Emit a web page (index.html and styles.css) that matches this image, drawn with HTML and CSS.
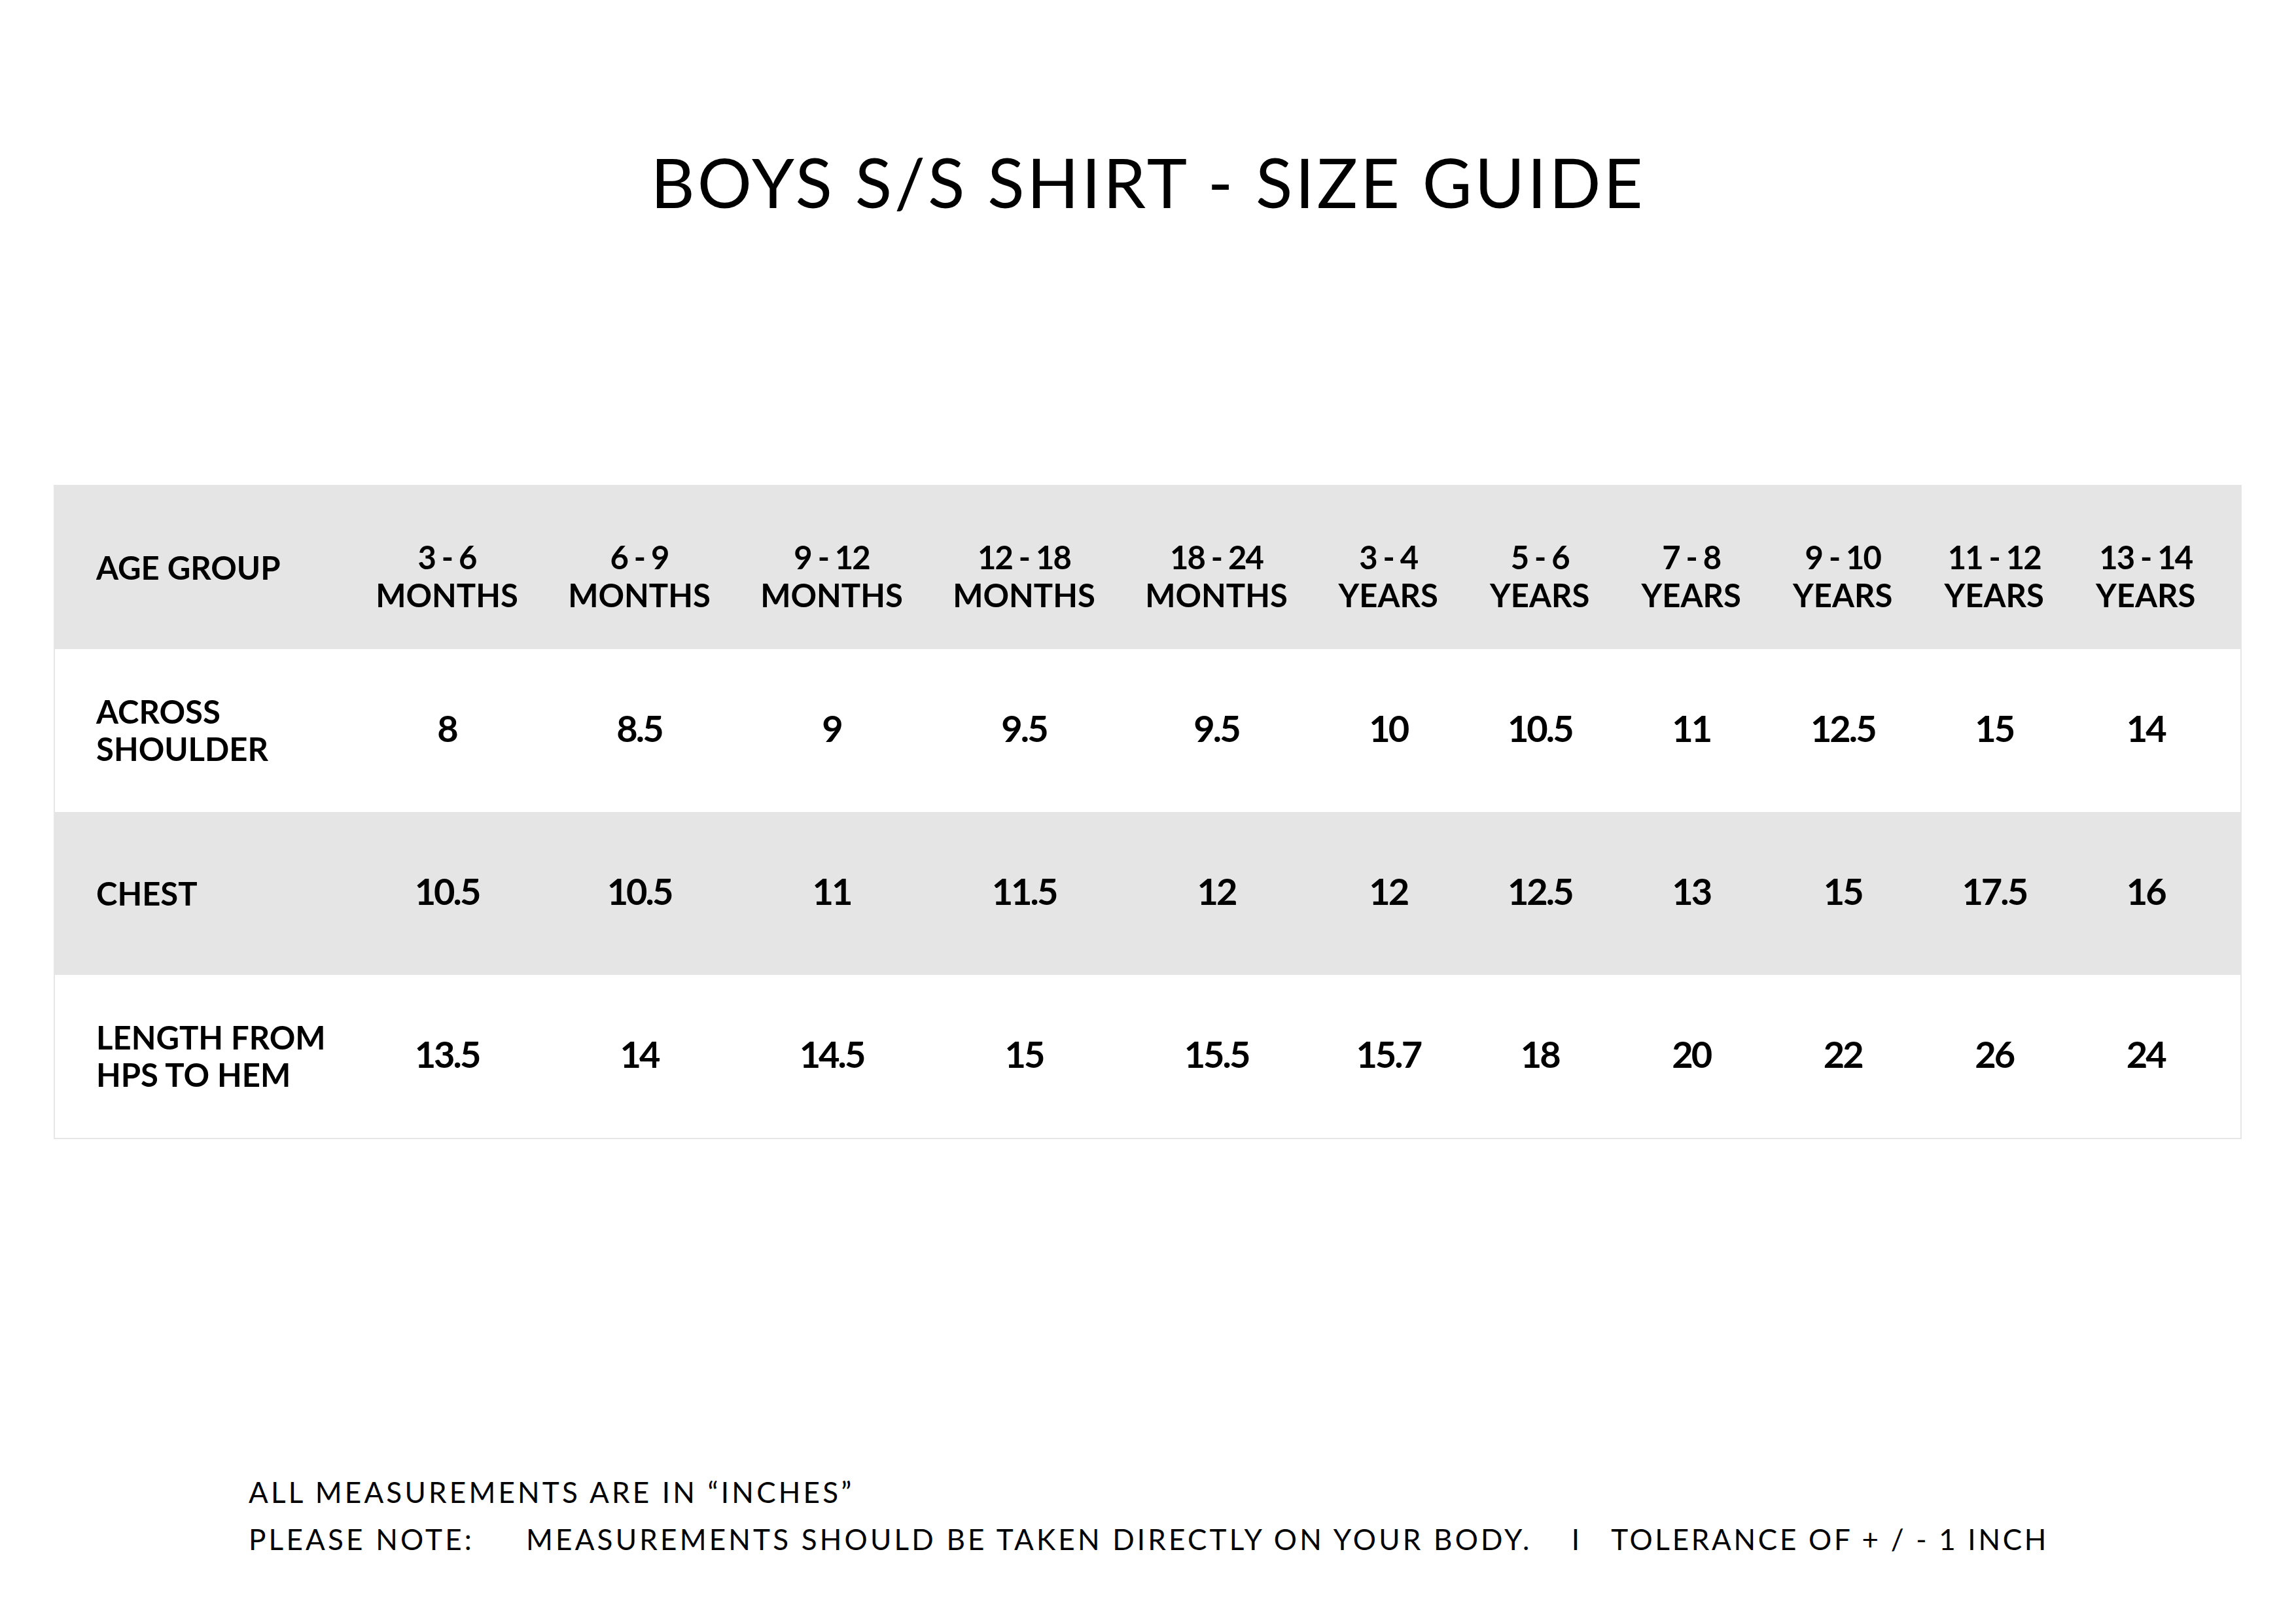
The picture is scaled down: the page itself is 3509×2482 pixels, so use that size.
FILE: index.html
```html
<!DOCTYPE html>
<html lang="en">
<head>
<meta charset="utf-8">
<title>Boys S/S Shirt - Size Guide</title>
<link rel="stylesheet" href="styles.css">
</head>
<body>
<main class="page">
  <h1 class="title">BOYS S/S SHIRT - SIZE GUIDE</h1>

  <section class="table">
    <div class="row row-head">
      <div class="label">AGE GROUP</div>
      <div class="cell head"><span class="range">3 - 6</span><span>MONTHS</span></div>
      <div class="cell head"><span class="range">6 - 9</span><span>MONTHS</span></div>
      <div class="cell head"><span class="range">9 - 12</span><span>MONTHS</span></div>
      <div class="cell head"><span class="range">12 - 18</span><span>MONTHS</span></div>
      <div class="cell head"><span class="range">18 - 24</span><span>MONTHS</span></div>
      <div class="cell head"><span class="range">3 - 4</span><span>YEARS</span></div>
      <div class="cell head"><span class="range">5 - 6</span><span>YEARS</span></div>
      <div class="cell head"><span class="range">7 - 8</span><span>YEARS</span></div>
      <div class="cell head"><span class="range">9 - 10</span><span>YEARS</span></div>
      <div class="cell head"><span class="range">11 - 12</span><span>YEARS</span></div>
      <div class="cell head"><span class="range">13 - 14</span><span>YEARS</span></div>
    </div>

    <div class="row row-white">
      <div class="label"><span>ACROSS</span><span>SHOULDER</span></div>
      <div class="cell">8</div>
      <div class="cell">8.5</div>
      <div class="cell">9</div>
      <div class="cell">9.5</div>
      <div class="cell">9.5</div>
      <div class="cell">10</div>
      <div class="cell">10.5</div>
      <div class="cell">11</div>
      <div class="cell">12.5</div>
      <div class="cell">15</div>
      <div class="cell">14</div>
    </div>

    <div class="row row-grey">
      <div class="label">CHEST</div>
      <div class="cell">10.5</div>
      <div class="cell">10.5</div>
      <div class="cell">11</div>
      <div class="cell">11.5</div>
      <div class="cell">12</div>
      <div class="cell">12</div>
      <div class="cell">12.5</div>
      <div class="cell">13</div>
      <div class="cell">15</div>
      <div class="cell">17.5</div>
      <div class="cell">16</div>
    </div>

    <div class="row row-white row-last">
      <div class="label"><span>LENGTH FROM</span><span>HPS TO HEM</span></div>
      <div class="cell">13.5</div>
      <div class="cell">14</div>
      <div class="cell">14.5</div>
      <div class="cell">15</div>
      <div class="cell">15.5</div>
      <div class="cell">15.7</div>
      <div class="cell">18</div>
      <div class="cell">20</div>
      <div class="cell">22</div>
      <div class="cell">26</div>
      <div class="cell">24</div>
    </div>
  </section>

  <footer class="notes">
    <p class="note">ALL MEASUREMENTS ARE IN “INCHES”</p>
    <p class="note"><span class="note-label">PLEASE NOTE:</span><span class="note-text">MEASUREMENTS SHOULD BE TAKEN DIRECTLY ON YOUR BODY.</span><span class="sep">I</span><span class="note-tol">TOLERANCE OF + / - 1 INCH</span></p>
  </footer>
</main>
</body>
</html>
```

FILE: styles.css
```css
html, body {
  margin: 0;
  padding: 0;
  background: #ffffff;
}

body {
  width: 3509px;
  height: 2482px;
  overflow: hidden;
  color: #000000;
  font-family: "Lato", "Liberation Sans", sans-serif;
}

.page {
  display: flex;
  flex-direction: column;
  padding-top: 216px;
}

.title {
  margin: 0;
  font-size: 104px;
  font-weight: 400;
  line-height: 1.2;
  letter-spacing: 4px;
  text-align: center;
}

.table {
  margin: 400px 83px 0 82px;
  border: 2px solid #e6e6e6;
  display: flex;
  flex-direction: column;
}

.row {
  display: grid;
  grid-template-columns: 452px repeat(5, 294px) repeat(6, 231.5px);
  padding-right: 29px;
  height: 249px;
  align-items: center;
}

.row-head,
.row-grey {
  background: #e5e5e5;
}

.row-white {
  background: #ffffff;
}

.label {
  padding-left: 63px;
  font-size: 49px;
  font-weight: 700;
  line-height: 57px;
  display: flex;
  flex-direction: column;
}

.cell {
  text-align: center;
  font-size: 56px;
  font-weight: 700;
  line-height: 1.2;
  letter-spacing: -3px;
  padding-bottom: 8px;
}

.cell.head {
  font-size: 49px;
  line-height: 58px;
  letter-spacing: 0;
  display: flex;
  flex-direction: column;
  padding-top: 26px;
  padding-bottom: 0;
}

.range {
  letter-spacing: -2px;
}

.notes {
  margin-top: 503px;
  padding-left: 380px;
}

.note {
  margin: 0;
  font-size: 44px;
  font-weight: 400;
  line-height: 72px;
  letter-spacing: 4.2px;
  white-space: nowrap;
}

.note-text {
  margin-left: 79px;
}

.sep {
  margin-left: 60px;
}

.note-tol {
  margin-left: 44px;
  letter-spacing: 3.7px;
}
```
